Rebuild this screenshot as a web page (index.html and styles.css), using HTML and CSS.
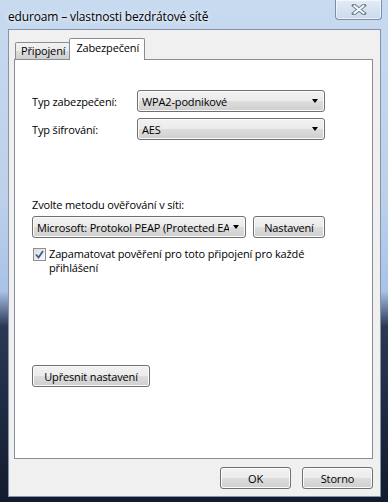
FILE: index.html
```html
<!DOCTYPE html>
<html lang="cs">
<head>
  <meta charset="UTF-8">
  <title>eduroam – vlastnosti bezdrátové sítě</title>
  <link rel="stylesheet" href="styles.css">
</head>
<body>
  <div class="window">
    <div class="titlebar">
      <span class="title">eduroam – vlastnosti bezdrátové sítě</span>
      <div class="close">
        <svg width="16" height="11" viewBox="0 0 16 11">
          <path d="M3 1.5 L13 9.5 M13 1.5 L3 9.5" stroke="#6f7d8f" stroke-width="4" stroke-linecap="square"/>
          <path d="M3.5 2 L12.5 9 M12.5 2 L3.5 9" stroke="#f4f7fb" stroke-width="2" stroke-linecap="square"/>
        </svg>
      </div>
    </div>

    <div class="client">
      <div class="tabs">
        <div class="tab">Připojení</div>
        <div class="tab active">Zabezpečení</div>
      </div>

      <div class="panel">
        <div class="fields">
          <span class="label">Typ zabezpečení:</span>
          <div class="combo">
            <span class="combo-text">WPA2-podnikové</span>
            <span class="arrow"></span>
          </div>
          <span class="label">Typ šifrování:</span>
          <div class="combo">
            <span class="combo-text">AES</span>
            <span class="arrow"></span>
          </div>
        </div>

        <div class="method">
          <span class="label">Zvolte metodu ověřování v síti:</span>
          <div class="method-row">
            <div class="combo combo-method">
              <span class="combo-text">Microsoft: Protokol PEAP (Protected EAP)</span>
              <span class="arrow"></span>
            </div>
            <button class="btn btn-settings">Nastavení</button>
          </div>
          <div class="check">
            <span class="box">
              <svg width="9" height="9" viewBox="0 0 9 9">
                <path d="M1 4.5 L3.5 7.5 L8 1" fill="none" stroke="#3f5c92" stroke-width="1.8"/>
              </svg>
            </span>
            <span class="check-text">Zapamatovat pověření pro toto připojení pro každé přihlášení</span>
          </div>
        </div>

        <button class="btn btn-advanced">Upřesnit nastavení</button>
      </div>

      <div class="actions">
        <button class="btn btn-action">OK</button>
        <button class="btn btn-action">Storno</button>
      </div>
    </div>
  </div>
</body>
</html>
```

FILE: styles.css
```css
body {
  margin: 0;
  font-family: "Open Sans", "Noto Sans", sans-serif;
  font-size: 11px;
  letter-spacing: -0.15px;
  color: #000;
  background: #101a2a;
}
.window {
  width: 388px;
  height: 502px;
  box-sizing: border-box;
  padding: 0 7px 5px 8px;
  display: flex;
  flex-direction: column;
  background: linear-gradient(to bottom, #c8daef 0%, #bcd0ea 40%, #a9c2e6 58%, #2a3854 65%, #121c2e 100%);
}
.titlebar {
  height: 29px;
  display: flex;
  align-items: flex-start;
  justify-content: space-between;
  margin-right: -1px;
}
.title {
  margin-top: 8px;
  font-size: 12px;
  text-shadow: 0 0 6px #e9f1fa, 0 0 3px #e9f1fa;
}
.close {
  width: 45px;
  height: 19px;
  border: 1px solid #7b8ea8;
  border-top: none;
  border-radius: 0 0 4px 4px;
  background: linear-gradient(to bottom, #e3ecf7, #cbdaec);
  box-shadow: inset 0 0 0 1px rgba(255,255,255,0.6);
  display: flex;
  align-items: center;
  justify-content: center;
}
.client {
  flex: 1;
  background: #f0f0f0;
  border: 1px solid #8293ab;
  padding: 7px 7px 6px 5px;
  display: flex;
  flex-direction: column;
}
.tabs {
  display: flex;
  align-items: flex-end;
  padding-left: 1px;
  height: 22px;
}
.tab {
  height: 16px;
  padding: 0 4px 0 5px;
  line-height: 16px;
  border: 1px solid #898c95;
  border-bottom: none;
  border-radius: 2px 2px 0 0;
  background: linear-gradient(to bottom, #f2f2f2 0%, #ebebeb 50%, #dddddd 50%, #cfcfcf 100%);
}
.tab.active {
  height: 21px;
  line-height: 17px;
  padding: 0 5px 0 6px;
  margin-left: -1px;
  margin-bottom: -1px;
  background: #fff;
  position: relative;
  z-index: 1;
}
.panel {
  height: 400px;
  box-sizing: border-box;
  border: 1px solid #898c95;
  background: #fff;
  padding: 30px 0 0 17px;
  display: flex;
  flex-direction: column;
}
.fields {
  display: grid;
  grid-template-columns: 105px 188px;
  row-gap: 6px;
  align-items: center;
}
.combo {
  height: 22px;
  box-sizing: border-box;
  border: 1px solid #707070;
  border-radius: 3px;
  background: linear-gradient(to bottom, #f2f2f2 0%, #ebebeb 50%, #dddddd 50%, #cfcfcf 100%);
  box-shadow: inset 0 0 0 1px #fbfbfb;
  display: flex;
  align-items: center;
  padding: 0 6px 0 4px;
  overflow: hidden;
}
.combo-text {
  flex: 1;
  white-space: nowrap;
  overflow: hidden;
}
.arrow {
  width: 0;
  height: 0;
  margin-left: 4px;
  border-left: 3.5px solid transparent;
  border-right: 3.5px solid transparent;
  border-top: 4px solid #000;
}
.method {
  margin-top: 57px;
  display: flex;
  flex-direction: column;
}
.method-row {
  display: flex;
  gap: 7px;
  margin-top: 4px;
}
.combo-method {
  width: 214px;
}
.btn {
  font-family: inherit;
  font-size: 11px;
  letter-spacing: inherit;
  color: #000;
  border: 1px solid #707070;
  border-radius: 3px;
  background: linear-gradient(to bottom, #f2f2f2 0%, #ebebeb 50%, #dddddd 50%, #cfcfcf 100%);
  box-shadow: inset 0 0 0 1px #fbfbfb;
  padding: 0;
  height: 22px;
}
.btn-settings {
  width: 72px;
}
.check {
  display: flex;
  align-items: flex-start;
  margin-top: 9px;
  margin-left: 1px;
}
.box {
  width: 11px;
  height: 11px;
  flex: none;
  border: 1px solid #8e8f8f;
  background: linear-gradient(135deg, #dcdcdc, #fbfbfb);
  display: flex;
  align-items: center;
  justify-content: center;
  margin-top: 1px;
}
.check-text {
  width: 275px;
  margin-left: 3px;
  line-height: 14px;
}
.btn-advanced {
  width: 118px;
  margin-top: 90px;
}
.actions {
  display: flex;
  justify-content: flex-end;
  gap: 11px;
  margin-top: 8px;
}
.btn-action {
  width: 71px;
}
```
